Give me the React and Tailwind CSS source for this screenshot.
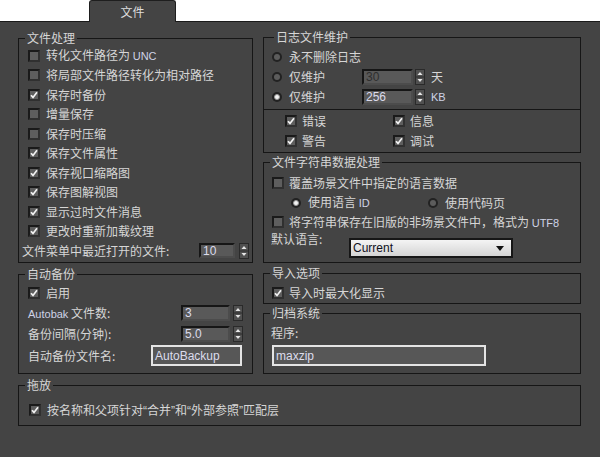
const LAT = "font-['Liberation_Sans',Arial,sans-serif] text-[11px] text-[#cfd3e6]";
const VAL = "font-['Liberation_Sans',Arial,sans-serif] text-[12px]";

function Check({ checked }) {
  return (
    <span className="w-[12px] h-[12px] shrink-0 border-2 border-t-[#1a1a1a] border-l-[#1a1a1a] border-r-[#303030] border-b-[#303030] bg-[#5e5e5e] flex items-center justify-center">
      {checked && (
        <svg width="8" height="8" viewBox="0 0 8 8">
          <path d="M1 4.2 L3 6.4 L7 1.2" fill="none" stroke="#f2f2f2" strokeWidth="1.7" />
        </svg>
      )}
    </span>
  );
}

function Radio({ on }) {
  return (
    <span className="w-[10px] h-[10px] shrink-0 rounded-full bg-[#222222] flex items-center justify-center">
      <span className={on ? "w-[6px] h-[6px] rounded-full bg-[#f2f2f2] border border-[#9a9a9a]" : "w-[6px] h-[6px] rounded-full bg-[#5c5c5c]"} />
    </span>
  );
}

function Spin({ h = 16 }) {
  const m = h / 2;
  return (
    <svg width="10" height={h} viewBox={`0 0 10 ${h}`} className="shrink-0">
      <rect x="0.5" y="0.5" width="9" height={h - 1} fill="#505050" stroke="#2a2a2a" />
      <line x1="1" y1={m} x2="9" y2={m} stroke="#2a2a2a" />
      <path d={`M5 ${m - 5} L7.5 ${m - 2} L2.5 ${m - 2}Z`} fill="#e6e6e6" />
      <path d={`M5 ${m + 5} L7.5 ${m + 2} L2.5 ${m + 2}Z`} fill="#e6e6e6" />
    </svg>
  );
}

function Num({ value, className, dim }) {
  return (
    <div className={`border-2 border-t-[#161616] border-l-[#161616] border-r-[#4c4c4c] border-b-[#4c4c4c] bg-[#595959] flex items-center pl-[2px] ${VAL} ${dim ? "text-[#2e2e2e]" : "text-[#dcdcec]"} ${className}`}>
      {value}
    </div>
  );
}

function Group({ title, lg = "ml-[6px]", className = "", children }) {
  return (
    <fieldset className={`border border-[#161616] min-w-0 ${className}`}>
      <legend className={`${lg} px-[2px] leading-[16px]`}>{title}</legend>
      {children}
    </fieldset>
  );
}

function CRow({ checked, children }) {
  return (
    <div className="h-[19.5px] flex items-center pl-[9px] gap-[6px]">
      <Check checked={checked} />
      <span className="whitespace-nowrap">{children}</span>
    </div>
  );
}

export default function App() {
  return (
    <div className="w-[600px] h-[457px] bg-[#444444] flex flex-col overflow-hidden font-['Noto_Sans_CJK_SC','Noto_Sans',sans-serif] text-[12px] leading-[16px] text-[#d6d6d6]">
      <div className="h-[22px] shrink-0 bg-white border-b border-[#1a1a1a] flex items-start">
        <div className="ml-[89px] w-[87px] h-[22px] bg-[#444444] border-x border-t border-[#1e1e1e] rounded-t-[3px] flex items-center justify-center text-[#dedede]">
          文件
        </div>
      </div>

      <div className="flex-1 pl-[18px] pr-[19px] pt-[7px] flex flex-col">
        <div className="flex gap-[10px]">
          {/* Left column */}
          <div className="w-[235px] flex flex-col mt-[1px]">
            <Group title="文件处理" className="pb-[1.5px]">
              <CRow>转化文件路径为 <span className={LAT}>UNC</span></CRow>
              <CRow>将局部文件路径转化为相对路径</CRow>
              <CRow checked>保存时备份</CRow>
              <CRow>增量保存</CRow>
              <CRow>保存时压缩</CRow>
              <CRow checked>保存文件属性</CRow>
              <CRow checked>保存视口缩略图</CRow>
              <CRow checked>保存图解视图</CRow>
              <CRow checked>显示过时文件消息</CRow>
              <CRow checked>更改时重新加载纹理</CRow>
              <div className="h-[19.5px] flex items-center pl-[3px] pr-[3px]">
                <span className="whitespace-nowrap">文件菜单中最近打开的文件:</span>
                <Num value="10" className="ml-auto w-[36px] h-[15px]" />
                <span className="ml-[4px]"><Spin h={16} /></span>
              </div>
            </Group>

            <Group title="自动备份" className="mt-[3px] pb-[6px]">
              <div className="h-[21px] flex items-center pl-[9px] gap-[6px]">
                <Check checked />
                <span>启用</span>
              </div>
              <div className="h-[20px] flex items-center pl-[9px] pr-[9px]">
                <span className="whitespace-nowrap"><span className={LAT}>Autobak</span> 文件数:</span>
                <Num value="3" className="ml-auto w-[49px] h-[16px]" />
                <span className="ml-[3px]"><Spin h={16} /></span>
              </div>
              <div className="h-[21px] flex items-center pl-[9px] pr-[9px]">
                <span className="whitespace-nowrap">备份间隔(分钟):</span>
                <Num value="5.0" className="ml-auto w-[49px] h-[16px]" />
                <span className="ml-[3px]"><Spin h={16} /></span>
              </div>
              <div className="h-[23px] flex items-center pl-[9px] pr-[10px]">
                <span className="whitespace-nowrap">自动备份文件名:</span>
                <div className={`ml-auto w-[91px] h-[21px] border-2 border-[#e4e4e4] bg-[#575757] flex items-center pl-[2px] ${VAL} text-[#dcdcec]`}>
                  AutoBackup
                </div>
              </div>
            </Group>
          </div>

          {/* Right column */}
          <div className="w-[318px] flex flex-col">
            <Group title="日志文件维护" lg="ml-[10px]" className="pb-[1px]">
              <div className="pt-[2px]">
                <div className="h-[20px] flex items-center pl-[8px] gap-[7px]">
                  <Radio />
                  <span>永不删除日志</span>
                </div>
                <div className="h-[20px] flex items-center pl-[8px]">
                  <Radio />
                  <span className="ml-[7px] w-[73px]">仅维护</span>
                  <Num value="30" dim className="w-[51px] h-[16px]" />
                  <span className="ml-[2px]"><Spin h={16} /></span>
                  <span className="ml-[6px]">天</span>
                </div>
                <div className="h-[20px] flex items-center pl-[8px]">
                  <Radio on />
                  <span className="ml-[7px] w-[73px]">仅维护</span>
                  <Num value="256" className="w-[51px] h-[16px]" />
                  <span className="ml-[2px]"><Spin h={16} /></span>
                  <span className={`ml-[6px] ${LAT}`}>KB</span>
                </div>
              </div>
              <div className="mt-[2px] border-t border-[#161616]" />
              <div className="pt-[1px]">
                <div className="h-[20px] flex items-center pl-[21px]">
                  <span className="w-[108px] flex items-center gap-[5px]"><Check checked /><span>错误</span></span>
                  <span className="flex items-center gap-[5px]"><Check checked /><span>信息</span></span>
                </div>
                <div className="h-[20px] flex items-center pl-[21px]">
                  <span className="w-[108px] flex items-center gap-[5px]"><Check checked /><span>警告</span></span>
                  <span className="flex items-center gap-[5px]"><Check checked /><span>调试</span></span>
                </div>
              </div>
            </Group>

            <Group title="文件字符串数据处理" className="mt-[1px] pt-[3px] pb-[4px]">
              <div className="h-[20px] flex items-center pl-[8px] gap-[5px]">
                <Check />
                <span>覆盖场景文件中指定的语言数据</span>
              </div>
              <div className="h-[19px] flex items-center pl-[27px]">
                <span className="w-[137px] flex items-center gap-[7px]">
                  <Radio on />
                  <span className="whitespace-nowrap">使用语言 <span className={LAT}>ID</span></span>
                </span>
                <span className="flex items-center gap-[7px]"><Radio /><span>使用代码页</span></span>
              </div>
              <div className="h-[20px] flex items-center pl-[8px] gap-[5px]">
                <Check />
                <span className="whitespace-nowrap">将字符串保存在旧版的非场景文件中，格式为 <span className={LAT}>UTF8</span></span>
              </div>
              <div className="h-[26px] flex items-start pl-[7px]">
                <span className="w-[78px] -mt-[1px]">默认语言:</span>
                <div className="mt-[6px] w-[164px] h-[20px] border-2 border-[#161616] bg-gradient-to-b from-[#f4f4f4] to-[#d4d4d4] flex items-center pl-[2px] pr-[7px]">
                  <span className={`${VAL} text-[#10101c]`}>Current</span>
                  <svg width="8" height="5" viewBox="0 0 8 5" className="ml-auto">
                    <path d="M0 0 L8 0 L4 5Z" fill="#111111" />
                  </svg>
                </div>
              </div>
            </Group>

            <Group title="导入选项" className="mt-[2px] pt-[2px]">
              <div className="h-[20px] flex items-center pl-[8px] gap-[5px]">
                <Check checked />
                <span>导入时最大化显示</span>
              </div>
            </Group>

            <Group title="归档系统" className="mt-[1px] pb-[7px]">
              <div className="mt-[4px] pl-[7px] leading-[16px]">程序:</div>
              <div className={`mt-[4px] ml-[8px] w-[214px] h-[21px] border-2 border-[#e4e4e4] bg-[#575757] flex items-center pl-[2px] ${VAL} text-[#dcdcec]`}>
                maxzip
              </div>
            </Group>
          </div>
        </div>

        <Group title="拖放" className="mt-[3px] pt-[7px] pb-[5px]">
          <div className="h-[20px] flex items-center pl-[10px] gap-[6px]">
            <Check checked />
            <span className="whitespace-nowrap">
              按名称和父项针对<span className="font-['Liberation_Sans',sans-serif]">“</span>合并<span className="font-['Liberation_Sans',sans-serif]">”</span>和<span className="font-['Liberation_Sans',sans-serif]">“</span>外部参照<span className="font-['Liberation_Sans',sans-serif]">”</span>匹配层
            </span>
          </div>
        </Group>
      </div>
    </div>
  );
}
